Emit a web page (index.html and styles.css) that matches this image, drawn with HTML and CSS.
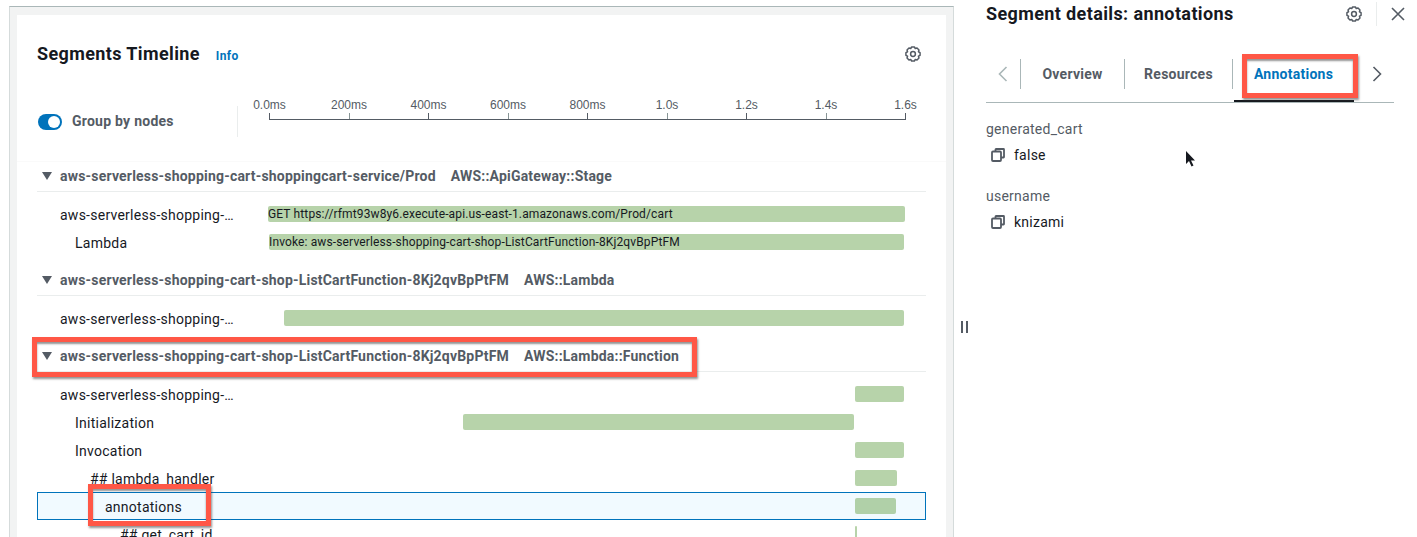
FILE: index.html
```html
<!DOCTYPE html>
<html lang="en">
<head>
    <meta charset="UTF-8">
    <title>Segments Timeline</title>
    <link rel="stylesheet" href="styles.css">
</head>
<body>
<div class="pagina">

    <!-- Panel izquierdo: timeline -->
    <section class="lado-timeline">
        <div class="tarjeta">
            <header class="tarjeta-cabecera">
                <div class="titulo-fila">
                    <h2>Segments Timeline</h2>
                    <a class="info">Info</a>
                </div>
                <svg class="engrane" viewBox="0 0 16 16"><path d="M6.630.930H9.370L10.260 2.550 12.030 2.030 13.970 3.970 13.450 5.740 15.070 6.630V9.370L13.450 10.260 13.970 12.030 12.030 13.970 10.260 13.450 9.370 15.070H6.630L5.740 13.450 3.970 13.970 2.030 12.030 2.550 10.260.930 9.370V6.630L2.550 5.740 2.030 3.970 3.970 2.030 5.740 2.550z"/><circle cx="8" cy="8" r="2.4"/></svg>
            </header>

            <div class="controles">
                <div class="grupo-toggle">
                    <span class="toggle"><span class="perilla"></span></span>
                    <span class="toggle-texto">Group by nodes</span>
                </div>
                <div class="eje">
                    <div class="marca"><span>0.0ms</span><i></i></div>
                    <div class="marca"><span>200ms</span><i></i></div>
                    <div class="marca"><span>400ms</span><i></i></div>
                    <div class="marca"><span>600ms</span><i></i></div>
                    <div class="marca"><span>800ms</span><i></i></div>
                    <div class="marca"><span>1.0s</span><i></i></div>
                    <div class="marca"><span>1.2s</span><i></i></div>
                    <div class="marca"><span>1.4s</span><i></i></div>
                    <div class="marca"><span>1.6s</span><i></i></div>
                </div>
            </div>

            <div class="grupo">
                <div class="grupo-titulo"><span class="triangulo"></span><span>aws-serverless-shopping-cart-shoppingcart-service/Prod</span><span>AWS::ApiGateway::Stage</span></div>
                <div class="filas">
                    <div class="fila"><span class="nombre n0">aws-serverless-shopping-…</span><div class="pista"><div class="barra" style="margin-left:0;width:637px">GET https://rfmt93w8y6.execute-api.us-east-1.amazonaws.com/Prod/cart</div></div></div>
                    <div class="fila"><span class="nombre n1">Lambda</span><div class="pista"><div class="barra" style="margin-left:1px;width:635px">Invoke: aws-serverless-shopping-cart-shop-ListCartFunction-8Kj2qvBpPtFM</div></div></div>
                </div>
            </div>

            <div class="grupo">
                <div class="grupo-titulo"><span class="triangulo"></span><span>aws-serverless-shopping-cart-shop-ListCartFunction-8Kj2qvBpPtFM</span><span>AWS::Lambda</span></div>
                <div class="filas">
                    <div class="fila"><span class="nombre n0">aws-serverless-shopping-…</span><div class="pista"><div class="barra" style="margin-left:16px;width:620px"></div></div></div>
                </div>
            </div>

            <div class="grupo">
                <div class="grupo-titulo"><span class="triangulo"></span><span>aws-serverless-shopping-cart-shop-ListCartFunction-8Kj2qvBpPtFM</span><span>AWS::Lambda::Function</span></div>
                <div class="filas">
                    <div class="fila"><span class="nombre n0">aws-serverless-shopping-…</span><div class="pista"><div class="barra" style="margin-left:587px;width:49px"></div></div></div>
                    <div class="fila"><span class="nombre n1">Initialization</span><div class="pista"><div class="barra" style="margin-left:195px;width:391px"></div></div></div>
                    <div class="fila"><span class="nombre n1">Invocation</span><div class="pista"><div class="barra" style="margin-left:587px;width:49px"></div></div></div>
                    <div class="fila"><span class="nombre n2">## lambda_handler</span><div class="pista"><div class="barra" style="margin-left:587px;width:42px"></div></div></div>
                    <div class="fila seleccionada"><span class="nombre n3">annotations</span><div class="pista"><div class="barra" style="margin-left:587px;width:41px"></div></div></div>
                    <div class="fila"><span class="nombre n4">## get_cart_id</span><div class="pista"><div class="barra" style="margin-left:587px;width:2px"></div></div></div>
                </div>
            </div>
        </div>

        <!-- Recuadros rojos de la captura -->
        <div class="recuadro r-funcion"></div>
        <div class="recuadro r-segmento"></div>
    </section>

    <div class="divisor"><i></i><i></i></div>

    <!-- Panel derecho: detalles -->
    <aside class="lado-detalles">
        <header class="detalles-cabecera">
            <h2>Segment details: annotations</h2>
            <div class="detalles-acciones">
                <svg class="engrane" viewBox="0 0 16 16"><path d="M6.630.930H9.370L10.260 2.550 12.030 2.030 13.970 3.970 13.450 5.740 15.070 6.630V9.370L13.450 10.260 13.970 12.030 12.030 13.970 10.260 13.450 9.370 15.070H6.630L5.740 13.450 3.970 13.970 2.030 12.030 2.550 10.260.930 9.370V6.630L2.550 5.740 2.030 3.970 3.970 2.030 5.740 2.550z"/><circle cx="8" cy="8" r="2.4"/></svg>
                <span class="sep-acciones"></span>
                <svg class="cerrar" viewBox="0 0 14 14"><path d="M1 1l12 12M13 1L1 13"/></svg>
            </div>
        </header>

        <nav class="pestanas">
            <svg class="flecha apagada" viewBox="0 0 10 16"><path d="M8.500 1L1.500 8l7 7"/></svg>
            <a class="pestana">Overview</a>
            <a class="pestana">Resources</a>
            <a class="pestana activa">Annotations</a>
            <svg class="flecha" viewBox="0 0 10 16"><path d="M1.500 1l7 7-7 7"/></svg>
        </nav>

        <dl class="anotaciones">
            <dt>generated_cart</dt>
            <dd><svg class="copiar" viewBox="0 0 14 14"><path d="M4.500 3.500V1.500a.5.5 0 0 1 .5-.5h7.500a.5.5 0 0 1 .5.5V9a.5.5 0 0 1-.5.5H10"/><rect x="1" y="3.500" width="9" height="9.500" rx="1"/></svg>false</dd>
            <dt>username</dt>
            <dd><svg class="copiar" viewBox="0 0 14 14"><path d="M4.500 3.500V1.500a.5.5 0 0 1 .5-.5h7.500a.5.5 0 0 1 .5.5V9a.5.5 0 0 1-.5.5H10"/><rect x="1" y="3.500" width="9" height="9.500" rx="1"/></svg>knizami</dd>
        </dl>

        <div class="recuadro r-pestana"></div>
        <svg class="cursor" viewBox="0 0 10 16"><path d="M1 0v13l3-3 2.500 5.500 2-1L6 9.500h4z"/></svg>
    </aside>
</div>
</body>
</html>
```

FILE: styles.css
```css
/* Base */
html, body {
    margin: 0;
    height: 537px;
    overflow: hidden;
    background: #fff;
}
body {
    font-family: "Roboto", "Liberation Sans", sans-serif;
    font-size: 14px;
    letter-spacing: .25px;
    color: #16191f;
}
h2 {
    margin: 0;
    font-size: 18px;
    font-weight: 700;
    line-height: 24px;
    letter-spacing: .38px;
}
.pagina {
    display: flex;
    height: 537px;
}

/* Panel izquierdo */
.lado-timeline {
    position: relative;
    box-sizing: border-box;
    width: 945px;
    height: 531px;
    margin: 6px 0 0 9px;
    padding: 8px 7px 0;
    background: #f2f3f3;
    border: 1px solid #aab7b8;
    border-bottom: none;
    border-left-color: #d5dbdb;
    border-right-color: #d5dbdb;
}
.tarjeta {
    height: 523px;
    box-sizing: border-box;
    padding: 0 20px;
    background: #fff;
    overflow: hidden;
}
.tarjeta-cabecera {
    display: flex;
    justify-content: space-between;
    align-items: center;
    height: 24px;
    padding-top: 27px;
}
.titulo-fila {
    display: flex;
    align-items: center;
    gap: 16px;
}
.info {
    color: #0073bb;
    font-size: 12px;
    font-weight: 700;
    letter-spacing: .35px;
    padding-top: 3px;
}
.engrane {
    width: 16px;
    height: 16px;
    fill: none;
    stroke: #545b64;
    stroke-width: 1.5;
    stroke-linejoin: round;
}
.tarjeta-cabecera .engrane {
    margin-right: 5px;
}

/* Controles y eje */
.controles {
    display: flex;
    height: 95px;
    margin: 0 -20px;
    padding: 0 20px;
    border-bottom: 1px solid #fafafa;
}
.grupo-toggle {
    display: flex;
    align-items: center;
    gap: 10px;
    width: 199px;
    height: 31px;
    margin-top: 40px;
    padding-left: 1px;
    border-right: 1px solid #eaeded;
}
.toggle {
    display: flex;
    justify-content: flex-end;
    align-items: center;
    box-sizing: border-box;
    width: 24px;
    height: 16px;
    padding: 0 2px;
    border-radius: 8px;
    background: #0073bb;
}
.perilla {
    width: 12px;
    height: 12px;
    border-radius: 50%;
    background: #fff;
}
.toggle-texto {
    color: #545b64;
    font-weight: 700;
    margin-top: -1px;
}
.eje {
    display: flex;
    justify-content: space-between;
    align-items: flex-end;
    width: 637px;
    height: 24px;
    margin: 29px 0 0 31px;
    border-bottom: 1px solid #545b64;
    letter-spacing: 0;
}
.marca {
    display: flex;
    flex-direction: column;
    align-items: center;
    width: 1px;
}
.marca span {
    font-family: "Liberation Sans", sans-serif;
    font-size: 12px;
    line-height: 14px;
    color: #545b64;
    white-space: nowrap;
    margin-bottom: 1px;
}
.marca i {
    display: block;
    width: 1px;
    height: 6px;
    background: #545b64;
}
.marca:nth-child(even) i {
    background: #879596;
}

/* Grupos y filas */
.grupo {
    margin-bottom: 10px;
}
.grupo-titulo {
    display: flex;
    align-items: center;
    gap: 15px;
    height: 27px;
    padding: 0 0 2px 23px;
    position: relative;
    border-bottom: 1px solid #eaeded;
    color: #545b64;
    font-weight: 700;
    letter-spacing: .2px;
    white-space: nowrap;
}
.triangulo {
    position: absolute;
    left: 5px;
    top: 10px;
    border-left: 5px solid transparent;
    border-right: 5px solid transparent;
    border-top: 8px solid #545b64;
}
.filas {
    padding-top: 8px;
}
.fila {
    display: flex;
    align-items: center;
    box-sizing: border-box;
    height: 28px;
}
.fila.seleccionada {
    background: #f1faff;
    box-shadow: inset 0 0 0 1px #0073bb;
}
.seleccionada .barra {
    background: #b0d0a8;
}
.nombre {
    box-sizing: border-box;
    width: 231px;
    margin-top: 2px;
    white-space: nowrap;
}
.n0 { padding-left: 23px; }
.n1 { padding-left: 38px; }
.n2 { padding-left: 53px; }
.n3 { padding-left: 68px; }
.n4 { padding-left: 83px; }
.pista {
    flex: 1;
}
.barra {
    height: 16px;
    border-radius: 2px;
    background: #b7d3aa;
    font-size: 12px;
    letter-spacing: .13px;
    line-height: 16px;
    white-space: nowrap;
}

/* Recuadros rojos */
.recuadro {
    position: absolute;
    box-sizing: border-box;
    border: 5px solid #ff5746;
    box-shadow: 1px 2px 2px rgba(60, 60, 60, .55), inset 0 2px 2px rgba(60, 60, 60, .55);
}
.r-funcion {
    left: 22px;
    top: 330px;
    width: 665px;
    height: 40px;
}
.r-segmento {
    left: 78px;
    top: 477px;
    width: 123px;
    height: 42px;
}

/* Divisor */
.divisor {
    display: flex;
    align-items: center;
    gap: 3px;
    width: 32px;
    box-sizing: border-box;
    padding: 116px 0 0 7px;
}
.divisor i {
    width: 2px;
    height: 12px;
    background: #545b64;
}

/* Panel derecho */
.lado-detalles {
    position: relative;
    width: 408px;
}
.detalles-cabecera {
    display: flex;
    justify-content: space-between;
    align-items: center;
    height: 28px;
}
.detalles-acciones {
    display: flex;
    align-items: center;
    margin-right: -11px;
}
.sep-acciones {
    width: 1px;
    height: 24px;
    margin: 0 14px;
    background: #eaeded;
}
.cerrar {
    width: 14px;
    height: 14px;
    fill: none;
    stroke: #545b64;
    stroke-width: 1.6;
}
.pestanas {
    position: relative;
    display: flex;
    align-items: center;
    height: 75px;
    border-bottom: 1px solid #aab7b8;
    box-sizing: border-box;
    padding-top: 18px;
}
.flecha {
    width: 10px;
    height: 16px;
    fill: none;
    stroke: #545b64;
    stroke-width: 1.6;
}
.flecha.apagada {
    stroke: #aab7b8;
    margin: 0 0 0 12px;
}
.pestana {
    display: flex;
    align-items: center;
    justify-content: center;
    color: #545b64;
    font-weight: 700;
    height: 30px;
    border-left: 1px solid #aab7b8;
    box-sizing: border-box;
}
.pestana:nth-of-type(1) { width: 104px; margin-left: 12px; }
.pestana:nth-of-type(2) { width: 108px; }
.pestana:nth-of-type(3) { width: 122px; }
.pestana + .flecha { margin-left: 18px; }
.pestana.activa {
    color: #0073bb;
    position: relative;
}
.pestana.activa::after {
    content: "";
    position: absolute;
    left: 1px;
    right: 0;
    bottom: -13px;
    height: 2px;
    background: #16191f;
}
.anotaciones {
    margin: 17px 0 0;
}
.anotaciones dt {
    color: #545b64;
    line-height: 18px;
}
.anotaciones dd {
    display: flex;
    align-items: center;
    gap: 9px;
    height: 20px;
    margin: 7px 0 22px 5px;
}
.copiar {
    width: 14px;
    height: 14px;
    fill: none;
    stroke: #545b64;
    stroke-width: 1.8;
}
.r-pestana {
    left: 256px;
    top: 54px;
    width: 116px;
    height: 44px;
}
.cursor {
    position: absolute;
    left: 199px;
    top: 151px;
    width: 10px;
    height: 16px;
    fill: #16191f;
}
```
